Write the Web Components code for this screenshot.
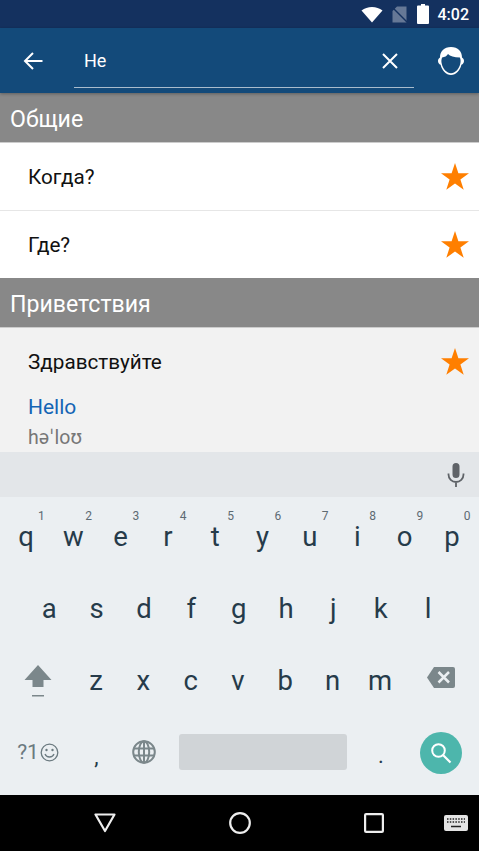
<!DOCTYPE html>
<html>
<head>
<meta charset="utf-8">
<title>Phrasebook</title>
<style>
  html, body { margin: 0; padding: 0; background: #fff; }
  body { width: 479px; height: 851px; overflow: hidden; font-family: Roboto, "Noto Sans", sans-serif; display: flex; flex-direction: column; }
</style>
</head>
<body>
<status-bar></status-bar>
<search-bar value="Не"></search-bar>
<section-head>Общие</section-head>
<phrase-row>Когда?</phrase-row>
<phrase-row last>Где?</phrase-row>
<section-head>Приветствия</section-head>
<phrase-row open>Здравствуйте
  <span slot="word">Hello</span>
  <span slot="ipa">həˈloʊ</span>
</phrase-row>
<suggest-bar></suggest-bar>
<soft-keyboard></soft-keyboard>
<nav-bar></nav-bar>

<script>
const STAR = `<svg width="30" height="30" viewBox="0 0 30 30"><path fill="#ff7f00" d="M15 1l3.4 10.2H29l-8.6 6.3 3.3 10.3L15 21.5l-8.7 6.3 3.3-10.3L1 11.2h10.6z"/></svg>`

class StatusBar extends HTMLElement {
  constructor() {
    super()
    this.attachShadow({ mode: 'open' })
  }
  connectedCallback() {
    this.shadowRoot.innerHTML = `
      <style>
        :host { display: flex; flex: none; height: 28px; background: #14315f; color: #fff; align-items: center; justify-content: flex-end; padding-right: 10px; }
        span { font: 500 16px Roboto, sans-serif; margin-left: 9px; }
        svg { display: block; }
        .sim { margin-left: 9px; }
        .bat { margin-left: 10px; }
      </style>
      <svg width="22" height="17" viewBox="0 0 22 17"><path fill="#fff" d="M11 16.5L.5 4.6C3.5 2.2 7 1 11 1s7.500 1.200 10.500 3.600z"/></svg>
      <svg class="sim" width="15" height="17" viewBox="0 0 15 17"><path fill="#fff" opacity=".35" d="M5 .5h9.500v16H.5V5z"/><path stroke="#14315f" stroke-width="1.500" d="M0 1l15 15"/></svg>
      <svg class="bat" width="12" height="20" viewBox="0 0 12 20"><path fill="#fff" d="M4 0h4v1.500h3a1 1 0 0 1 1 1V19a1 1 0 0 1-1 1H1a1 1 0 0 1-1-1V2.500a1 1 0 0 1 1-1h3z"/></svg>
      <span>4:02</span>
    `
  }
}

class SearchBar extends HTMLElement {
  constructor() {
    super()
    this.attachShadow({ mode: 'open' })
  }
  connectedCallback() {
    this.shadowRoot.innerHTML = `
      <style>
        :host { display: flex; flex: none; height: 65px; background: #134a7a; align-items: center; color: #fff; position: relative; z-index: 1; box-shadow: 0 1px 3px rgba(0,0,0,.3); }
        .back { width: 74px; display: flex; padding-left: 23px; box-sizing: border-box; }
        .field { width: 340px; height: 53px; box-sizing: border-box; margin-top: 1px; border-bottom: 1px solid #a9bccd; display: flex; align-items: center; justify-content: space-between; padding: 0 15px 0 10px; font: 400 18px Roboto, sans-serif; }
        .me { flex: 1; display: flex; justify-content: center; padding-left: 9px; }
        svg { display: block; }
      </style>
      <div class="back">
        <svg width="20" height="20" viewBox="0 0 20 20"><path fill="none" stroke="#fff" stroke-width="2" d="M19.500 10H2M10 2l-8 8 8 8"/></svg>
      </div>
      <div class="field">
        <span>${this.getAttribute('value')}</span>
        <svg width="18" height="18" viewBox="0 0 18 18"><path stroke="#fff" stroke-width="2" d="M2 2l14 14M16 2L2 16"/></svg>
      </div>
      <div class="me">
        <svg width="26" height="28" viewBox="0 0 26 28">
          <path fill="#fff" d="M13 0c7 0 11 4.500 11 10.500 1.300.7 2 2 2 3.500 0 1.800-1 3.200-2.600 3.800C22 23.700 18 28 13 28S4 23.700 2.600 17.800C1 17.200 0 15.800 0 14c0-1.500.7-2.800 2-3.500C2 4.500 6 0 13 0z"/>
          <path fill="#134a7a" d="M4.100 10.500c2.500-.3 4.900-1.500 5.900-3.500 2 2 6 3.500 11.900 3.500.8 2 .9 4 .4 6-1 5.500-5.300 9.700-9.300 9.700s-8.300-4.200-9.300-9.700c-.5-2-.4-4 .4-6z"/>
        </svg>
      </div>
    `
  }
}

class SectionHead extends HTMLElement {
  constructor() {
    super()
    this.attachShadow({ mode: 'open' })
  }
  connectedCallback() {
    this.shadowRoot.innerHTML = `
      <style>
        :host { display: flex; flex: none; height: 50px; box-sizing: border-box; align-items: center; padding: 3px 0 0 10px; background: #888; color: #fff; font: 400 23.100px Roboto, sans-serif; border-bottom: 1px solid #ccc; }
      </style>
      <slot></slot>
    `
  }
}

class PhraseRow extends HTMLElement {
  constructor() {
    super()
    this.attachShadow({ mode: 'open' })
  }
  connectedCallback() {
    const open = this.hasAttribute('open')
    const last = this.hasAttribute('last')
    this.shadowRoot.innerHTML = `
      <style>
        :host { display: block; flex: none; box-sizing: border-box; background: ${open ? '#f2f2f2' : '#fff'}; height: ${open ? 124 : last ? 67 : 68}px; border-bottom: ${open || last ? 0 : 1}px solid #e6e6e6; overflow: hidden; color: #111; }
        .top { display: flex; align-items: center; justify-content: space-between; height: ${open ? '68px' : '100%'}; padding: 0 9px 0 28px; font: 400 20.700px Roboto, sans-serif; }
        .top svg { display: block; }
        .word { padding-left: 28px; color: #1565b5; font: 400 21px/24px Roboto, sans-serif; margin-top: -1px; }
        .ipa { padding-left: 28px; color: #777; font: 400 19.500px/24px Roboto, "DejaVu Sans", sans-serif; margin-top: 7px; }
      </style>
      <div class="top"><span><slot></slot></span>${STAR}</div>
      ${open ? '<div class="word"><slot name="word"></slot></div><div class="ipa"><slot name="ipa"></slot></div>' : ''}
    `
  }
}

class SuggestBar extends HTMLElement {
  constructor() {
    super()
    this.attachShadow({ mode: 'open' })
  }
  connectedCallback() {
    this.shadowRoot.innerHTML = `
      <style>
        :host { display: flex; flex: none; height: 45px; background: #e3e6e9; align-items: center; justify-content: flex-end; padding-right: 14px; }
        svg { display: block; }
      </style>
      <svg width="18" height="24" viewBox="0 0 18 24"><path fill="#5f6368" d="M9 0a3.500 3.500 0 0 1 3.500 3.500v8a3.500 3.500 0 0 1-7 0v-8A3.500 3.500 0 0 1 9 0z"/><path fill="none" stroke="#5f6368" stroke-width="1.800" d="M1.500 10.500v1a7.500 7.500 0 0 0 15 0v-1M9 19v5"/></svg>
    `
  }
}

class KbKey extends HTMLElement {
  constructor() {
    super()
    this.attachShadow({ mode: 'open' })
  }
  connectedCallback() {
    const hint = this.getAttribute('hint')
    this.shadowRoot.innerHTML = `
      <style>
        :host { display: flex; position: relative; flex: none; width: var(--w, 47.330px); height: 100%; align-items: center; justify-content: center; color: #263b4a; font: 400 27.500px Roboto, sans-serif; }
        .hint { position: absolute; top: 9px; right: 5px; font: 400 12px Roboto, sans-serif; color: #5d6a72; }
      </style>
      <slot></slot>${hint ? `<span class="hint">${hint}</span>` : ''}
    `
  }
}

class SoftKeyboard extends HTMLElement {
  constructor() {
    super()
    this.attachShadow({ mode: 'open' })
  }
  connectedCallback() {
    const keys = (s, hints) => [...s].map((c, i) => `<kb-key ${hints ? `hint="${hints[i]}"` : ''}>${c}</kb-key>`).join('')
    this.shadowRoot.innerHTML = `
      <style>
        :host { display: flex; flex-direction: column; flex: none; height: 298px; box-sizing: border-box; padding-top: 3px; background: #ebeff2; }
        .row { display: flex; height: 72px; justify-content: flex-start; }
        .r1 { padding-left: 2.300px; }
        .r2 { padding-left: 25.700px; }
        .r4 { align-items: center; }
        svg { display: block; }
        .sym { color: #6b7a80; font-size: 21px; }
        .space { width: 168px; height: 36px; border-radius: 3px; background: #d0d4d7; margin-left: 8px; }
        .go { width: 42px; height: 42px; margin: 2px 0 0 5px; border-radius: 50%; background: #4db6ac; display: flex; align-items: center; justify-content: center; }
      </style>
      <div class="row r1">${keys('qwertyuiop', '1234567890')}</div>
      <div class="row r2">${keys('asdfghjkl')}</div>
      <div class="row">
        <kb-key style="--w:72.330px">
          <svg style="margin-left:4px" width="28" height="34" viewBox="0 0 28 34"><path fill="#7b878b" d="M14 2l13.500 15H19.500v7h-11v-7H.5z"/><path fill="#7b878b" d="M8 32h12v1.500H8z"/></svg>
        </kb-key>
        ${keys('zxcvbnm')}
        <kb-key style="--w:75px">
          <svg style="margin-bottom:5px" width="28" height="21" viewBox="0 0 28 21"><path fill="#7b878b" d="M7 0h19a2 2 0 0 1 2 2v17a2 2 0 0 1-2 2H7L0 10.500z"/><path stroke="#ebeff2" stroke-width="2.500" d="M11.500 5l10.500 10.500M22 5L11.500 15.500"/></svg>
        </kb-key>
      </div>
      <div class="row r4">
        <kb-key class="sym" style="--w:76px">?1<svg style="margin-left:1px" width="19" height="19" viewBox="0 0 19 19"><g fill="none" stroke="#6b7a80" stroke-width="1.300"><circle cx="9.500" cy="9.500" r="8.300"/><path d="M5 11c1 2.500 3 3 4.500 3s3.500-.5 4.500-3"/></g><circle cx="6.500" cy="7" r="1.200" fill="#6b7a80"/><circle cx="12.500" cy="7" r="1.200" fill="#6b7a80"/></svg></kb-key>
        <kb-key style="--w:41px;top:4px;font-size:22px">,</kb-key>
        <kb-key style="--w:54px">
          <svg width="24" height="24" viewBox="0 0 24 24"><g fill="none" stroke="#7b878b" stroke-width="2"><circle cx="12" cy="12" r="10.800"/><ellipse cx="12" cy="12" rx="5.200" ry="10.800"/><path d="M12 1v22M2 8.500h20M2 15.500h20"/></g></svg>
        </kb-key>
        <div class="space"></div>
        <kb-key style="--w:68px;top:3px;font-size:22px">.</kb-key>
        <div class="go">
          <svg width="22" height="22" viewBox="0 0 22 22"><circle cx="8.500" cy="8.500" r="6.300" fill="none" stroke="#fff" stroke-width="2"/><path stroke="#fff" stroke-width="2.200" d="M13 13l7.500 7.500"/></svg>
        </div>
      </div>
    `
  }
}

class NavBar extends HTMLElement {
  constructor() {
    super()
    this.attachShadow({ mode: 'open' })
  }
  connectedCallback() {
    this.shadowRoot.innerHTML = `
      <style>
        :host { display: grid; flex: none; height: 56px; background: #000; grid-template-columns: 105px 135px 134px 82px; align-items: center; justify-items: end; }
        svg { display: block; }
        .mid { justify-self: end; margin-right: -11px; }
      </style>
      <svg style="margin-right:-11px" width="22" height="20" viewBox="0 0 22 20"><path fill="none" stroke="#eee" stroke-width="2.200" stroke-linejoin="round" d="M1.500 1.500h19L11 18z"/></svg>
      <svg class="mid" width="22" height="22" viewBox="0 0 22 22"><circle cx="11" cy="11" r="9.800" fill="none" stroke="#eee" stroke-width="2.200"/></svg>
      <svg style="margin-right:-10px" width="20" height="20" viewBox="0 0 20 20"><rect x="1.100" y="1.100" width="17.800" height="17.800" rx="1" fill="none" stroke="#eee" stroke-width="2.200"/></svg>
      <svg style="margin-right:-12px" width="24" height="18" viewBox="0 0 24 18"><rect width="24" height="16" y="1" rx="2" fill="#e4e4e4"/><path stroke="#222" stroke-width="1.500" stroke-dasharray="1.500 1.300" d="M3 5h18M3 8h18"/><path stroke="#222" stroke-width="1.500" d="M7 12.500h10"/></svg>
    `
  }
}

customElements.define('status-bar', StatusBar)
customElements.define('search-bar', SearchBar)
customElements.define('section-head', SectionHead)
customElements.define('phrase-row', PhraseRow)
customElements.define('suggest-bar', SuggestBar)
customElements.define('kb-key', KbKey)
customElements.define('soft-keyboard', SoftKeyboard)
customElements.define('nav-bar', NavBar)
</script>
</body>
</html>
